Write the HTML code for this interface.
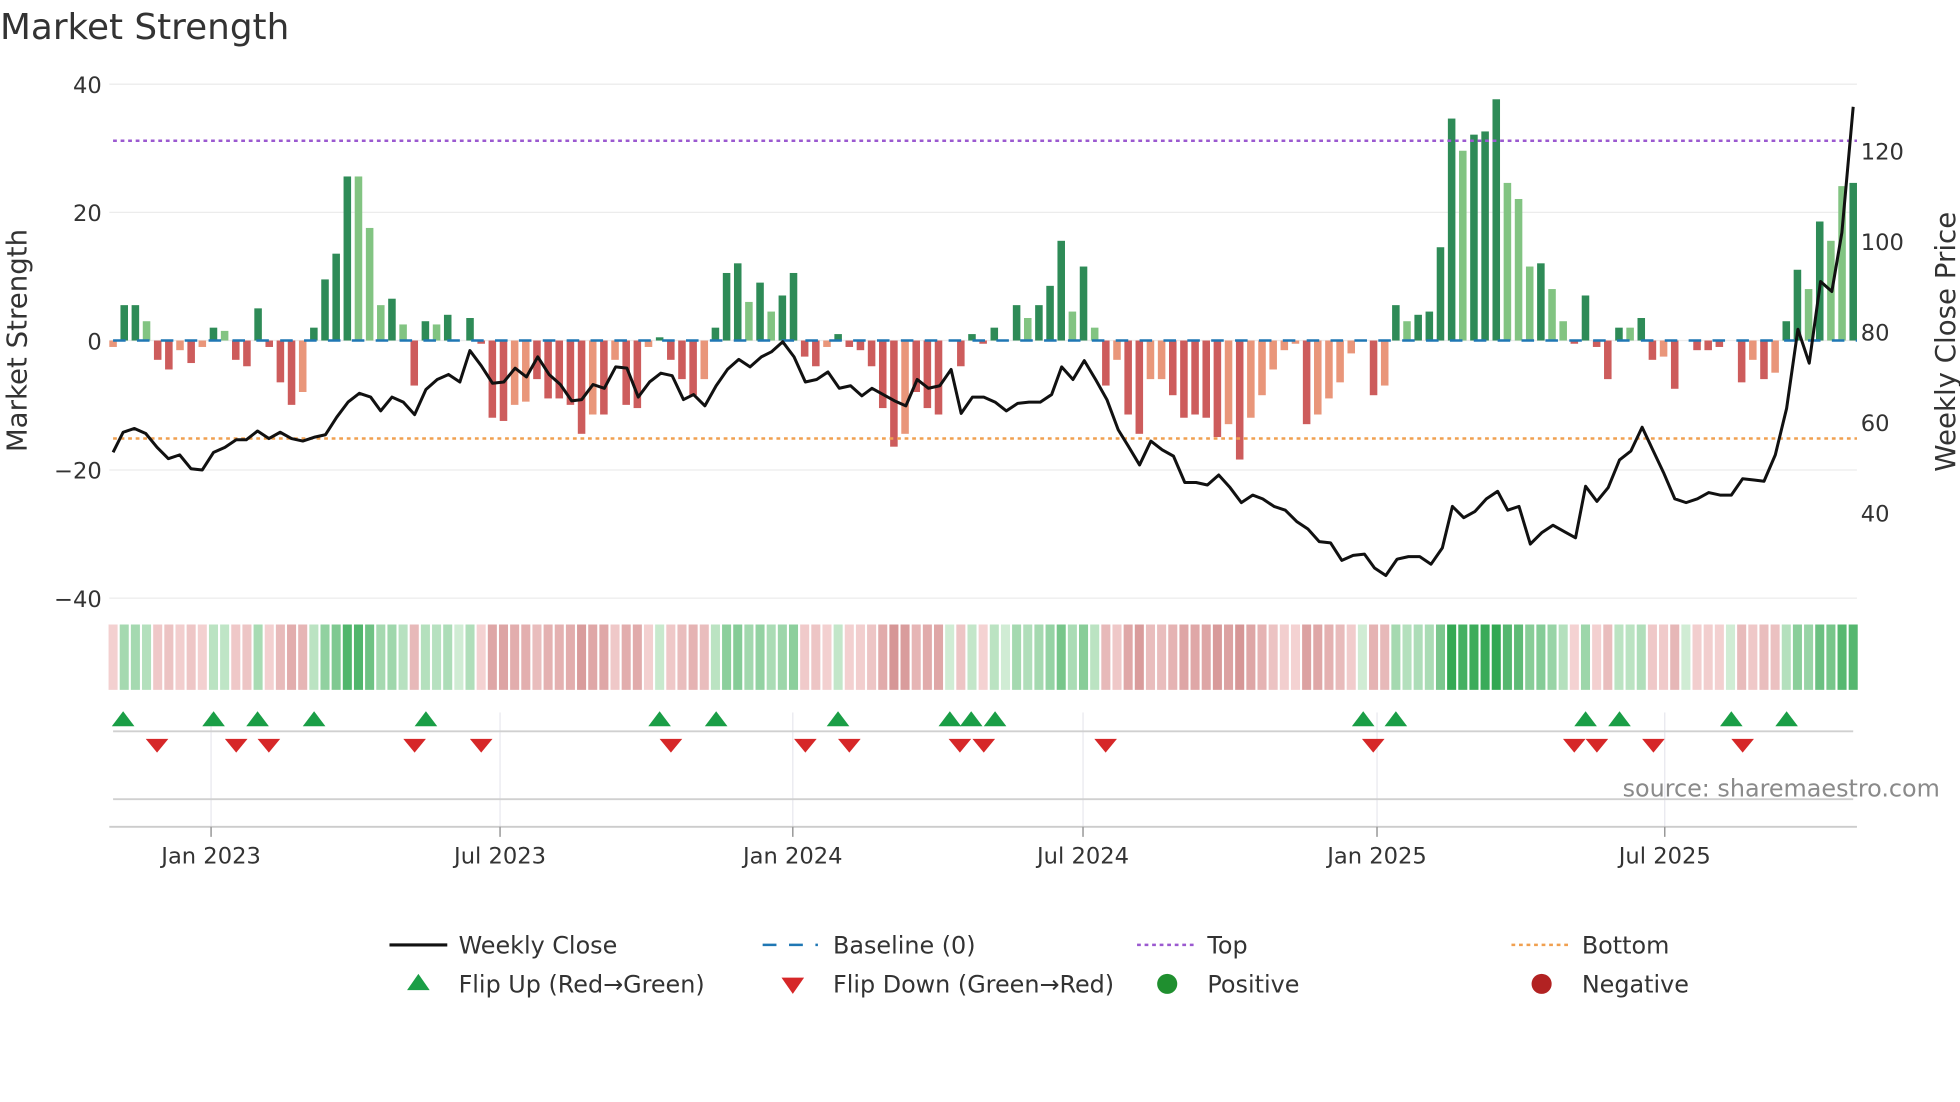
<!DOCTYPE html>
<html><head><meta charset="utf-8"><style>
html,body{margin:0;padding:0;background:#fff;width:1960px;height:1102px;overflow:hidden}
svg{display:block}
text{font-family:"DejaVu Sans","Liberation Sans",sans-serif;fill:#333}
</style></head><body>
<svg id="s" width="1960" height="1102" viewBox="0 0 1560 877" preserveAspectRatio="none" xmlns="http://www.w3.org/2000/svg">
<rect width="1560" height="877" fill="#fff"/>
<text x="0" y="31" font-size="28.5">Market Strength</text>
<g stroke="#ececec" stroke-width="1">
<line x1="87" x2="1478" y1="67" y2="67"/><line x1="87" x2="1478" y1="169" y2="169"/>
<line x1="87" x2="1478" y1="271" y2="271"/><line x1="87" x2="1478" y1="374" y2="374"/>
<line x1="87" x2="1478" y1="476" y2="476"/>
</g>
<g font-size="18" text-anchor="end">
<text x="81" y="74">40</text><text x="81" y="176">20</text><text x="81" y="278">0</text>
<text x="81" y="381">−20</text><text x="81" y="483">−40</text>
</g>
<g font-size="18">
<text x="1481" y="127">120</text><text x="1481" y="199">100</text><text x="1481" y="271">80</text>
<text x="1481" y="343">60</text><text x="1481" y="415">40</text>
</g>
<text font-size="22" transform="translate(21,271) rotate(-90)" text-anchor="middle">Market Strength</text>
<text font-size="22" transform="translate(1556,272) rotate(-90)" text-anchor="middle">Weekly Close Price</text>
<g id="bars"></g>
<line x1="90" x2="1478" y1="271" y2="271" stroke="#1f77b4" stroke-width="2" stroke-dasharray="10,9"/>
<line x1="90" x2="1478" y1="112" y2="112" stroke="#9b59d0" stroke-width="2" stroke-dasharray="3,3"/>
<line x1="90" x2="1478" y1="349" y2="349" stroke="#f0a050" stroke-width="2" stroke-dasharray="3,3"/>
<polyline id="price" fill="none" stroke="#111" stroke-width="2.4" stroke-linejoin="round"/>
<g id="strip"></g>
<g stroke="#e8e8ee" stroke-width="1">
<line x1="168" x2="168" y1="567" y2="658"/><line x1="398" x2="398" y1="567" y2="658"/>
<line x1="631" x2="631" y1="567" y2="658"/><line x1="862" x2="862" y1="567" y2="658"/>
<line x1="1096" x2="1096" y1="567" y2="658"/><line x1="1325" x2="1325" y1="567" y2="658"/>
</g>
<line x1="90" x2="1475" y1="582" y2="582" stroke="#d0d0d0" stroke-width="1.5"/>
<line x1="90" x2="1475" y1="636" y2="636" stroke="#d0d0d0" stroke-width="1.5"/>
<line x1="87" x2="1478" y1="658" y2="658" stroke="#ccc" stroke-width="1.5"/>
<g stroke="#999" stroke-width="1.2">
<line x1="168" x2="168" y1="658" y2="666"/><line x1="398" x2="398" y1="658" y2="666"/>
<line x1="631" x2="631" y1="658" y2="666"/><line x1="862" x2="862" y1="658" y2="666"/>
<line x1="1096" x2="1096" y1="658" y2="666"/><line x1="1325" x2="1325" y1="658" y2="666"/>
</g>
<g id="mk"></g>
<text x="1544" y="634" font-size="19" text-anchor="end" style="fill:#8a8a8a">source: sharemaestro.com</text>
<g font-size="18" text-anchor="middle">
<text x="168" y="687">Jan 2023</text><text x="398" y="687">Jul 2023</text><text x="631" y="687">Jan 2024</text>
<text x="862" y="687">Jul 2024</text><text x="1096" y="687">Jan 2025</text><text x="1325" y="687">Jul 2025</text>
</g>
<g font-size="19">
<line x1="310" x2="356" y1="752" y2="752" stroke="#111" stroke-width="2.5"/><text x="365" y="759">Weekly Close</text>
<line x1="607" x2="651" y1="752" y2="752" stroke="#1f77b4" stroke-width="2" stroke-dasharray="11,10"/><text x="663" y="759">Baseline (0)</text>
<line x1="905" x2="950" y1="752" y2="752" stroke="#9b59d0" stroke-width="2" stroke-dasharray="3,3"/><text x="961" y="759">Top</text>
<line x1="1203" x2="1248" y1="752" y2="752" stroke="#f0a050" stroke-width="2" stroke-dasharray="3,3"/><text x="1259" y="759">Bottom</text>
<polygon points="333,775 324,788 342,788" fill="#1a9e46"/><text x="365" y="790">Flip Up (Red→Green)</text>
<polygon points="622,778 640,778 631,791" fill="#d62728"/><text x="663" y="790">Flip Down (Green→Red)</text>
<circle cx="929" cy="783" r="8" fill="#1f8f2f"/><text x="961" y="790">Positive</text>
<circle cx="1227" cy="783" r="8" fill="#b22222"/><text x="1259" y="790">Negative</text>
</g>
</svg>
<script>
var V=[[-1,0],[5.5,1],[5.5,1],[3,0],[-3,1],[-4.5,1],[-1.5,0],[-3.5,1],[-1,0],[2,1],[1.5,0],[-3,1],[-4,1],[5,1],[-1,1],[-6.5,1],[-10,1],[-8,0],[2,1],[9.5,1],[13.5,1],[25.5,1],[25.5,0],[17.5,0],[5.5,0],[6.5,1],[2.5,0],[-7,1],[3,1],[2.5,0],[4,1],[0,0],[3.5,1],[-0.5,1],[-12,1],[-12.5,1],[-10,0],[-9.5,0],[-6,1],[-9,1],[-9,1],[-10,1],[-14.5,1],[-11.5,0],[-11.5,1],[-3,0],[-10,1],[-10.5,1],[-1,0],[0.5,1],[-3,1],[-6,1],[-8.5,1],[-6,0],[2,1],[10.5,1],[12,1],[6,0],[9,1],[4.5,0],[7,1],[10.5,1],[-2.5,1],[-4,1],[-1,0],[1,1],[-1,1],[-1.5,1],[-4,1],[-10.5,1],[-16.5,1],[-14.5,0],[-8,1],[-10.5,1],[-11.5,1],[0,0],[-4,1],[1,1],[-0.5,1],[2,1],[0,0],[5.5,1],[3.5,0],[5.5,1],[8.5,1],[15.5,1],[4.5,0],[11.5,1],[2,0],[-7,1],[-3,0],[-11.5,1],[-14.5,1],[-6,0],[-6,0],[-8.5,1],[-12,1],[-11.5,1],[-12,1],[-15,1],[-13,0],[-18.5,1],[-12,0],[-8.5,0],[-4.5,0],[-1.5,0],[-0.5,0],[-13,1],[-11.5,0],[-9,0],[-6.5,0],[-2,0],[0,0],[-8.5,1],[-7,0],[5.5,1],[3,0],[4,1],[4.5,1],[14.5,1],[34.5,1],[29.5,0],[32,1],[32.5,1],[37.5,1],[24.5,0],[22,0],[11.5,0],[12,1],[8,0],[3,0],[-0.5,1],[7,1],[-1,1],[-6,1],[2,1],[2,0],[3.5,1],[-3,1],[-2.5,0],[-7.5,1],[0,0],[-1.5,1],[-1.5,1],[-1,1],[0,0],[-6.5,1],[-3,0],[-6,1],[-5,0],[3,1],[11,1],[8,0],[18.5,1],[15.5,0],[24,0],[24.5,1]];
var n=V.length,x0=90,dx=(1475-90)/(n-1),ns="http://www.w3.org/2000/svg";
var B=document.getElementById('bars'),S=document.getElementById('strip');
function el(p,t,a){var e=document.createElementNS(ns,t);for(var k in a)e.setAttribute(k,a[k]);p.appendChild(e);}
function mix(a,b,t){return 'rgb('+a.map(function(v,i){return Math.round(v+(b[i]-v)*t)}).join(',')+')';}
V.forEach(function(v,i){var x=x0+i*dx,val=v[0],y=271-val*5.12;
 var c=val>=0?(v[1]?'#2e8b57':'#82c482'):(v[1]?'#cd5c5c':'#e9967a');
 if(Math.abs(val)>0.2)el(B,'rect',{x:x-3,y:Math.min(y,271),width:6,height:Math.abs(val)*5.12,fill:c});
 var t=Math.min(Math.abs(val)/35,1),sc;
 if(val>=0)sc=mix([208,236,212],[50,168,82],Math.pow(t,0.7));else sc=mix([245,212,212],[214,150,150],Math.min(Math.abs(val)/16,1));
 el(S,'rect',{x:x-3.6,y:497,width:7.2,height:52,fill:sc});
});
var P="90,360 98,344 107,341 116,345 125,356 134,365 143,362 152,373 161,374 170,360 179,356 188,350 196,350 205,343 214,349 223,344 232,349 241,351 250,348 259,346 268,332 277,320 286,313 295,316 303,327 312,316 321,320 330,330 339,310 348,302 357,298 366,304 374,279 383,291 392,305 401,304 410,293 419,300 428,284 437,298 446,306 455,319 463,318 472,306 481,309 490,292 499,293 508,316 517,304 526,297 535,299 544,318 552,314 561,323 570,307 579,294 588,286 597,292 606,284 614,280 623,272 632,284 641,304 650,302 659,296 668,309 677,307 686,315 694,309 703,314 712,319 721,323 730,302 739,309 748,307 757,294 765,329 774,316 783,316 792,320 801,327 810,321 819,320 828,320 837,314 845,292 854,302 863,287 872,302 881,318 890,342 898,355 907,370 916,351 925,358 934,363 943,384 952,384 961,386 970,378 979,388 988,400 997,394 1005,397 1014,403 1023,406 1032,415 1041,421 1050,431 1059,432 1068,446 1077,442 1086,441 1094,452 1103,458 1112,445 1121,443 1130,443 1139,449 1148,436 1156,403 1165,412 1174,407 1183,397 1192,391 1200,406 1209,403 1218,433 1227,424 1236,418 1245,423 1254,428 1262,387 1271,399 1280,388 1289,366 1298,359 1307,340 1315,357 1324,376 1333,397 1342,400 1351,397 1360,392 1369,394 1378,394 1387,381 1396,382 1404,383 1413,362 1422,325 1431,262 1440,289 1449,224 1458,232 1466,185 1475,85";
document.getElementById('price').setAttribute('points',P);
var M=document.getElementById('mk');
[98,170,205,250,339,525,570,667,756,773,792,1085,1111,1262,1289,1378,1422].forEach(function(x){el(M,'polygon',{points:(x)+',566 '+(x-9)+',578 '+(x+9)+',578',fill:'#1a9e46'});});
[125,188,214,330,383,534,641,676,764,783,880,1093,1253,1271,1316,1387].forEach(function(x){el(M,'polygon',{points:(x-9)+',588 '+(x+9)+',588 '+x+',599',fill:'#d62728'});});
</script>
</body></html>
